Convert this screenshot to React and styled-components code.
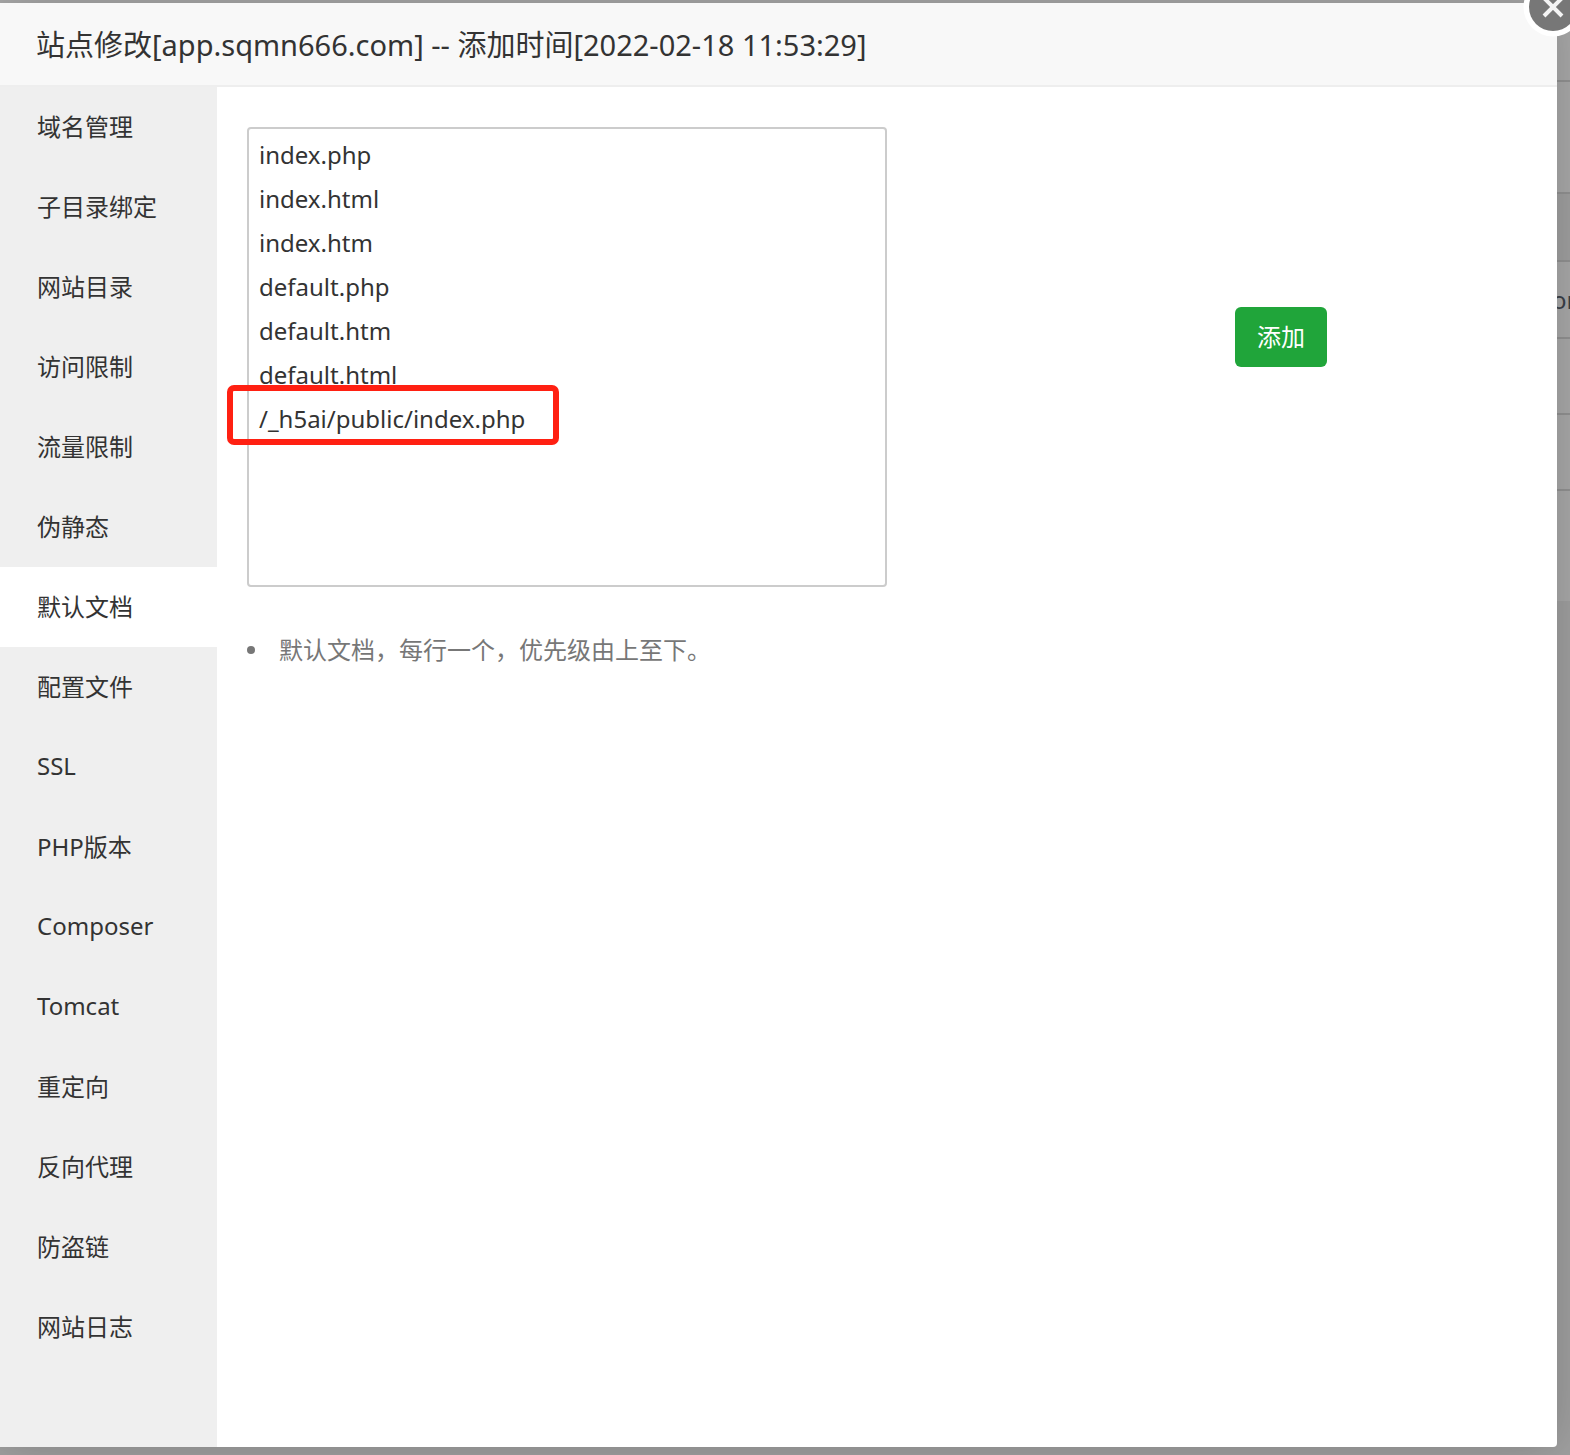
import React, { useState } from "react";
import styled, { createGlobalStyle } from "styled-components";

const GlobalStyle = createGlobalStyle`
  *, *::before, *::after { box-sizing: border-box; }
  body {
    margin: 0;
    color: #333;
    font-family: "Noto Sans", "Noto Sans CJK SC", sans-serif;
    font-size: 24px;
  }
  button, textarea { font: inherit; color: inherit; }
`;

const Page = styled.div`
  position: relative;
  display: flex;
  min-height: 100vh;
  padding: 3px 13px 8px 0;
  overflow: hidden;
  background: #a0a0a0;
`;

const Underlay = styled.div`
  position: absolute;
  inset: 0;
  display: flex;
  flex-direction: column;
`;

const UnderlayRow = styled.div`
  display: flex;
  align-items: center;
  justify-content: flex-end;
  height: ${(p) => p.$height}px;
  background: ${(p) => (p.$shaded ? "#a0a0a0" : "#a9a9a9")};
  border-bottom: ${(p) => (p.$last ? 0 : 2)}px solid #929292;
`;

const ClippedText = styled.span`
  width: 18px;
  overflow: hidden;
  white-space: nowrap;
  color: #3a4048;
`;

const Dialog = styled.section`
  position: relative;
  display: flex;
  flex: 1;
  flex-direction: column;
  background: #fff;
  border-radius: 0 0 4px 0;
  box-shadow: 0 0 50px rgba(0, 0, 0, 0.2);
`;

const TitleBar = styled.header`
  display: flex;
  align-items: center;
  height: 84px;
  padding: 2px 36px 0;
  background: #f8f8f8;
  border-bottom: 2px solid #eee;
`;

const Title = styled.h1`
  margin: 0;
  font-size: 29px;
  font-weight: 400;
  line-height: 40px;
`;

const CloseButton = styled.button`
  position: absolute;
  top: -26px;
  right: -26px;
  width: 60px;
  height: 60px;
  padding: 0;
  border: 0;
  background: none;
  cursor: pointer;

  svg { display: block; }
`;

const Body = styled.div`
  display: flex;
  flex: 1;
`;

const Sidebar = styled.nav`
  display: flex;
  flex-direction: column;
  width: 217px;
  flex-shrink: 0;
  background: #efefef;
`;

const SidebarItem = styled.button`
  height: 80px;
  padding: 0 37px 3px;
  border: 0;
  background: ${(p) => (p.$active ? "#fff" : "transparent")};
  text-align: left;
  white-space: nowrap;
  cursor: pointer;
`;

const Content = styled.main`
  flex: 1;
  padding: 40px 30px;
`;

const Editor = styled.div`
  display: flex;
  align-items: flex-start;
  justify-content: space-between;
`;

const DocumentField = styled.div`
  position: relative;
  display: flex;
  width: 50%;
`;

const DocumentList = styled.textarea`
  width: 100%;
  height: 460px;
  padding: 4px 10px;
  border: 2px solid #ccc;
  border-radius: 4px;
  outline: 0;
  background: #fff;
  line-height: 44px;
  resize: none;
`;

const Highlight = styled.div`
  position: absolute;
  top: 258px;
  left: -20px;
  width: 332px;
  height: 60px;
  border: 6px solid #ff2012;
  border-radius: 7px;
  pointer-events: none;
`;

const AddButton = styled.button`
  height: 60px;
  margin: 180px 200px 0 0;
  padding: 0 22px 3px;
  border: 0;
  border-radius: 6px;
  background: #20a53a;
  color: #fff;
  cursor: pointer;
`;

const Tips = styled.ul`
  margin: 38px 0 0;
  padding: 0;
  color: #777;
  line-height: 50px;
  list-style: none;
`;

const Tip = styled.li`
  display: flex;
  align-items: center;
  gap: 24px;

  &::before {
    content: "";
    width: 8px;
    height: 8px;
    border-radius: 50%;
    background: currentColor;
  }
`;

const sections = [
  "域名管理", "子目录绑定", "网站目录", "访问限制", "流量限制", "伪静态",
  "默认文档", "配置文件", "SSL", "PHP版本", "Composer", "Tomcat",
  "重定向", "反向代理", "防盗链", "网站日志",
];

const defaultDocuments = [
  "index.php", "index.html", "index.htm", "default.php",
  "default.htm", "default.html", "/_h5ai/public/index.php",
].join("\n");

const underlayRows = [
  { height: 82 },
  { height: 112 },
  { height: 68, shaded: true },
  { height: 77, text: "om" },
  { height: 76 },
  { height: 76 },
  { height: 110, last: true },
];

export default function App() {
  const [active, setActive] = useState("默认文档");
  const [documents, setDocuments] = useState(defaultDocuments);

  return (
    <Page>
      <GlobalStyle />
      <Underlay aria-hidden="true">
        {underlayRows.map((row, i) => (
          <UnderlayRow key={i} $height={row.height} $shaded={row.shaded} $last={row.last}>
            {row.text && <ClippedText>{row.text}</ClippedText>}
          </UnderlayRow>
        ))}
      </Underlay>
      <Dialog role="dialog" aria-labelledby="dialog-title">
        <TitleBar>
          <Title id="dialog-title">
            站点修改[app.sqmn666.com] -- 添加时间[2022-02-18 11:53:29]
          </Title>
        </TitleBar>
        <Body>
          <Sidebar>
            {sections.map((name) => (
              <SidebarItem
                key={name}
                type="button"
                $active={name === active}
                onClick={() => setActive(name)}
              >
                {name}
              </SidebarItem>
            ))}
          </Sidebar>
          <Content>
            <Editor>
              <DocumentField>
                <DocumentList
                  aria-label="默认文档"
                  spellCheck={false}
                  value={documents}
                  onChange={(e) => setDocuments(e.target.value)}
                />
                <Highlight />
              </DocumentField>
              <AddButton type="button">添加</AddButton>
            </Editor>
            <Tips>
              <Tip>默认文档，每行一个，优先级由上至下。</Tip>
            </Tips>
          </Content>
        </Body>
        <CloseButton type="button" aria-label="关闭">
          <svg width="60" height="60" viewBox="0 0 60 60" fill="none">
            <circle cx="30" cy="30" r="29.5" fill="#fff" />
            <circle cx="30" cy="30" r="24" fill="#777" />
            <path d="M21 21l18 18M39 21L21 39" stroke="#f4f4f4" strokeWidth="4" />
          </svg>
        </CloseButton>
      </Dialog>
    </Page>
  );
}
